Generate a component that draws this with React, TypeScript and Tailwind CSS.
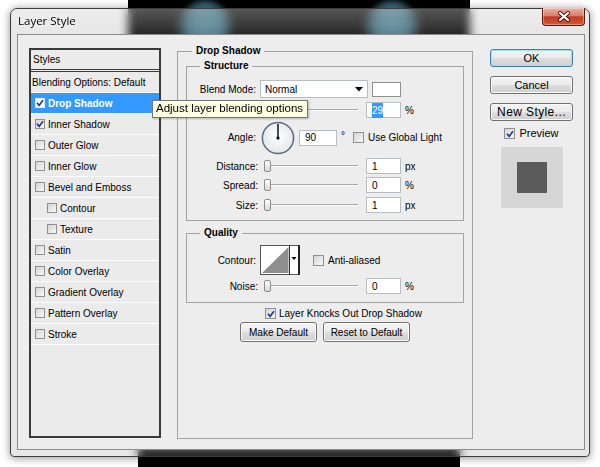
import React from "react";

type StyleRow = { label: string; checked?: boolean; selected?: boolean; indent?: boolean };

const styleRows: StyleRow[] = [
  { label: "Drop Shadow", checked: true, selected: true },
  { label: "Inner Shadow", checked: true },
  { label: "Outer Glow" },
  { label: "Inner Glow" },
  { label: "Bevel and Emboss" },
  { label: "Contour", indent: true },
  { label: "Texture", indent: true },
  { label: "Satin" },
  { label: "Color Overlay" },
  { label: "Gradient Overlay" },
  { label: "Pattern Overlay" },
  { label: "Stroke" },
];

function CheckBox({ checked = false, big = false, light = false }: { checked?: boolean; big?: boolean; light?: boolean }) {
  return (
    <span
      className={
        (big ? "h-[11px] w-[11px] " : "h-[10px] w-[10px] ") +
        (light ? "border-[#dfe9f7] bg-white " : "border-[#8e8f8f] bg-[linear-gradient(135deg,#d4d4d4,#f8f8f8)] ") +
        "flex shrink-0 items-center justify-center border"
      }
    >
      {checked && (
        <svg width="8" height="8" viewBox="0 0 8 8">
          <path d="M1 3.8 L3.1 6.4 L7 1.2" fill="none" stroke="#23388f" strokeWidth="1.7" />
        </svg>
      )}
    </span>
  );
}

function Slider() {
  return (
    <div className="relative ml-[6px] h-[16px] w-[94px] shrink-0">
      <div className="absolute left-0 right-0 top-[7px] h-[2px] border-t border-b border-t-[#a8a8a8] border-b-white" />
      <div className="absolute left-0 top-[2px] h-[12px] w-[7px] rounded-[2px] border border-[#8c8c8c] bg-[linear-gradient(#ffffff,#d8d8d8)]" />
    </div>
  );
}

function Field({ children, wide = false }: { children: React.ReactNode; wide?: boolean }) {
  return (
    <div
      className={
        (wide ? "w-[38px] " : "w-[35px] ") +
        "flex h-[16px] shrink-0 items-center border border-[#b8bcc3] bg-white pl-[5px]"
      }
    >
      {children}
    </div>
  );
}

function SliderRow({ label, value, unit, top }: { label: string; value: React.ReactNode; unit: string; top: string }) {
  return (
    <div className={top + " flex h-[16px] items-center"}>
      <span className="w-[71px] shrink-0 text-right">{label}</span>
      <Slider />
      <div className="ml-[8px]">
        <Field>{value}</Field>
      </div>
      <span className="ml-[4px]">{unit}</span>
    </div>
  );
}

function WinButton({ children, focused = false, className = "" }: { children: React.ReactNode; focused?: boolean; className?: string }) {
  return (
    <div
      className={
        (focused
          ? "border-[#3c7fb1] shadow-[inset_0_0_0_1px_#9fe3fb] "
          : "border-[#707070] shadow-[inset_0_0_0_1px_#fbfbfb] ") +
        "flex items-center justify-center rounded-[3px] border bg-[linear-gradient(#f4f4f4_0%,#ebebeb_50%,#dedede_52%,#cfcfcf_100%)] " +
        className
      }
    >
      {children}
    </div>
  );
}

export default function App() {
  return (
    <div className="relative h-[467px] w-[600px] overflow-hidden bg-white pl-[10px] pt-[8px] font-['Liberation_Sans',Arial,sans-serif] text-[10px] text-black">
      {/* desktop seen through the glass frame */}
      <div className="absolute left-[128px] top-0 h-[48px] w-[342px] bg-black" />
      <div className="absolute left-[176px] top-[-3px] h-[58px] w-[58px] rounded-full bg-[radial-gradient(circle,#4e8ca1_0%,#3d7084_48%,rgba(30,60,70,0)_70%)] blur-[1.5px]" />
      <div className="absolute left-[363px] top-[-3px] h-[58px] w-[58px] rounded-full bg-[radial-gradient(circle,#4e8ca1_0%,#3d7084_48%,rgba(30,60,70,0)_70%)] blur-[1.5px]" />
      <div className="absolute left-[138px] top-[446px] h-[21px] w-[322px] bg-black" />

      {/* window */}
      <div className="relative z-10 flex h-[449px] w-[580px] flex-col rounded-t-[7px] rounded-b-[4px] border border-[#3d3d3d] bg-[#a1a1a1]/25 backdrop-blur-[5px] shadow-[0_1px_8px_rgba(0,0,0,0.45)]">
        <div className="flex h-[25px] shrink-0 items-start justify-between rounded-t-[6px] bg-[linear-gradient(rgba(255,255,255,0.22),rgba(255,255,255,0))] pl-[7px] pr-[4px]">
          <span className="pt-[5px] font-['Open_Sans',sans-serif] text-[11.5px] leading-[14px] [text-shadow:0_0_6px_#fff]">
            Layer Style
          </span>
          <div className="-mt-[1px] flex h-[18px] w-[43px] items-center justify-center rounded-b-[4px] border border-t-0 border-[#5b1c12] bg-[linear-gradient(#eab0a3_0%,#d88070_45%,#c23b22_52%,#d3573c_100%)] shadow-[inset_0_0_0_1px_rgba(255,255,255,0.35)]">
            <svg width="14" height="11" viewBox="0 0 14 11">
              <path d="M3 2 L11 9 M11 2 L3 9" stroke="#4a1308" strokeWidth="4" strokeLinecap="round" />
              <path d="M3 2 L11 9 M11 2 L3 9" stroke="#ffffff" strokeWidth="2.2" strokeLinecap="round" />
            </svg>
          </div>
        </div>

        <div className="mb-[6px] ml-[6px] mr-[4px] flex flex-1 border border-[#8b8b8b] bg-[#ededed] pl-[11px] pt-[10px]">
          {/* styles list */}
          <div className="mt-[3px] flex h-[390px] w-[132px] shrink-0 flex-col border-2 border-[#3a3a3a] bg-[#ebebeb]">
            <div className="flex h-[22px] shrink-0 items-center border-b-[3px] border-double border-[#3a3a3a] pl-[2px]">
              Styles
            </div>
            <div className="flex h-[21px] shrink-0 items-center border-b border-white pl-[1px]">
              Blending Options: Default
            </div>
            {styleRows.map((row) => (
              <div
                key={row.label}
                className={
                  (row.selected ? "bg-[#3399ff] font-bold text-white " : "") +
                  (row.indent ? "pl-[16px] " : "pl-[4px] ") +
                  "flex h-[21px] shrink-0 items-center gap-[3px] border-b border-white"
                }
              >
                <CheckBox checked={row.checked} light={row.selected} />
                <span>{row.label}</span>
              </div>
            ))}
          </div>

          {/* drop shadow group */}
          <fieldset className="ml-[16px] h-[394px] w-[296px] shrink-0 border border-[#a3a3a3]">
            <legend className="ml-[14px] px-[4px] font-bold leading-[12px]">Drop Shadow</legend>
            <div className="px-[8px]">
              <fieldset className="mt-[3px] border border-[#a3a3a3] pb-[7px]">
                <legend className="ml-[13px] px-[4px] font-bold leading-[12px]">Structure</legend>

                <div className="mt-[8px] flex h-[18px] items-center">
                  <span className="w-[69px] shrink-0 text-right">Blend Mode:</span>
                  <div className="ml-[4px] flex h-[18px] w-[108px] items-center justify-between border border-[#b8bcc3] bg-white pl-[4px] pr-[4px]">
                    <span>Normal</span>
                    <svg width="8" height="5" viewBox="0 0 8 5">
                      <path d="M0 0 H8 L4 4.5 Z" fill="#000" />
                    </svg>
                  </div>
                  <div className="ml-[4px] h-[15px] w-[29px] border border-[#8f8f8f] bg-white" />
                </div>

                <SliderRow
                  label="Opacity:"
                  top="mt-[4px]"
                  unit="%"
                  value={<span className="bg-[#3399ff] text-white">29</span>}
                />

                <div className="mt-[3px] flex h-[33px] items-center">
                  <span className="w-[69px] shrink-0 text-right">Angle:</span>
                  <svg className="ml-[5px] shrink-0" width="34" height="34" viewBox="0 0 34 34">
                    <defs>
                      <radialGradient id="dial" cx="50%" cy="45%" r="60%">
                        <stop offset="0%" stopColor="#ffffff" />
                        <stop offset="100%" stopColor="#e2e4e8" />
                      </radialGradient>
                    </defs>
                    <circle cx="17" cy="17" r="15.6" fill="url(#dial)" stroke="#5b6885" strokeWidth="1.5" />
                    <line x1="17" y1="17" x2="17" y2="3" stroke="#000" strokeWidth="1.4" />
                    <circle cx="17" cy="17" r="1.6" fill="#000" />
                  </svg>
                  <div className="ml-[4px]">
                    <Field wide>90</Field>
                  </div>
                  <span className="ml-[4px] -mt-[5px]">°</span>
                  <div className="ml-[8px] flex items-center gap-[4px]">
                    <CheckBox big />
                    <span>Use Global Light</span>
                  </div>
                </div>

                <SliderRow label="Distance:" top="mt-[4px]" unit="px" value="1" />
                <SliderRow label="Spread:" top="mt-[3px]" unit="%" value="0" />
                <SliderRow label="Size:" top="mt-[4px]" unit="px" value="1" />
              </fieldset>

              <fieldset className="mt-[6px] border border-[#a3a3a3] pb-[8px]">
                <legend className="ml-[13px] px-[4px] font-bold leading-[12px]">Quality</legend>
                <div className="mt-[6px] flex h-[30px] items-center">
                  <span className="w-[69px] shrink-0 text-right">Contour:</span>
                  <svg className="ml-[4px] shrink-0" width="40" height="30" viewBox="0 0 40 30">
                    <rect x="0.5" y="0.5" width="39" height="29" fill="#fff" stroke="#555" />
                    <path d="M2 28 L28.5 2 L28.5 28 Z" fill="#8e8e8e" />
                    <line x1="29.5" y1="0" x2="29.5" y2="30" stroke="#333" />
                    <rect x="38" y="0" width="2" height="30" fill="#222" />
                    <path d="M31.5 12 H36.5 L34 15 Z" fill="#000" />
                  </svg>
                  <div className="ml-[13px] flex items-center gap-[4px]">
                    <CheckBox big />
                    <span>Anti-aliased</span>
                  </div>
                </div>
                <SliderRow label="Noise:" top="mt-[3px]" unit="%" value="0" />
              </fieldset>

              <div className="mt-[5px] flex h-[11px] items-center gap-[3px] pl-[79px]">
                <CheckBox checked big />
                <span>Layer Knocks Out Drop Shadow</span>
              </div>

              <div className="mt-[3px] flex justify-center gap-[6px]">
                <WinButton className="h-[20px] w-[77px]">Make Default</WinButton>
                <WinButton className="h-[20px] w-[87px]">Reset to Default</WinButton>
              </div>
            </div>
          </fieldset>

          {/* right column */}
          <div className="ml-[17px] mt-[4px] flex w-[83px] shrink-0 flex-col text-[11px]">
            <WinButton focused className="h-[18px]">OK</WinButton>
            <WinButton className="mt-[9px] h-[18px]">Cancel</WinButton>
            <WinButton className="mt-[9px] h-[18px] text-[12px] tracking-[0.4px]">New Style...</WinButton>
            <div className="mt-[7px] flex h-[11px] items-center justify-center gap-[4px]">
              <CheckBox checked big />
              <span>Preview</span>
            </div>
            <div className="mx-auto mt-[8px] flex h-[61px] w-[62px] items-center justify-center bg-[#d6d6d6]">
              <div className="h-[31px] w-[30px] bg-[#5b5b5b]" />
            </div>
          </div>
        </div>
      </div>

      {/* tooltip */}
      <div className="absolute left-[152px] top-[100px] z-20 flex h-[18px] w-[156px] items-center border border-[#767676] bg-[#ffffe1] pl-[3px] text-[11.5px] shadow-[1px_1px_2px_rgba(0,0,0,0.25)]">
        Adjust layer blending options
      </div>
    </div>
  );
}
